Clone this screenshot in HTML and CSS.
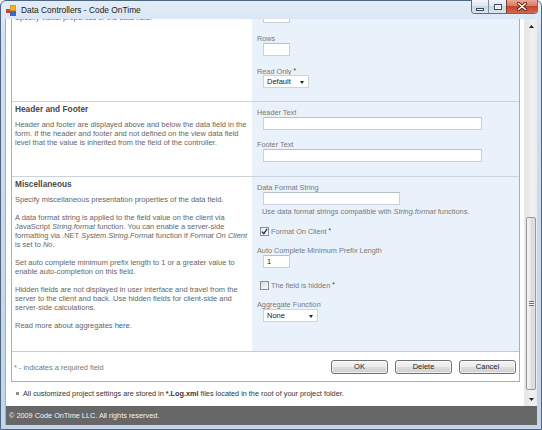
FILE: index.html
```html
<!DOCTYPE html>
<html>
<head>
<meta charset="utf-8">
<title>Data Controllers - Code OnTime</title>
<link rel="stylesheet" href="styles.css">
</head>
<body>
<div class="window">
  <div class="titlebar">
    <svg class="appicon" width="11" height="11" viewBox="0 0 11 11">
      <rect x="0" y="4" width="4" height="4" fill="#d8402e"/>
      <rect x="4" y="0" width="6" height="6" fill="#f3b425"/>
      <rect x="4" y="6" width="6" height="5" fill="#3a68c6"/>
      <rect x="4.5" y="0.5" width="5" height="5" fill="none" stroke="#c98a10" stroke-width="0.6"/>
    </svg>
    <span class="caption">Data Controllers - Code OnTime</span>
    <div class="capbtns">
      <div class="cb min"><span class="glyph-min"></span></div>
      <div class="cb max"><span class="glyph-max"></span></div>
      <div class="cb close">
        <svg width="12" height="9" viewBox="0 0 12 9">
          <path d="M2.5 1.5 L9.5 7.5 M9.5 1.5 L2.5 7.5" stroke="#5a1a10" stroke-width="3.2" stroke-linecap="round"/>
          <path d="M2.5 1.5 L9.5 7.5 M9.5 1.5 L2.5 7.5" stroke="#ffffff" stroke-width="1.6" stroke-linecap="round"/>
        </svg>
      </div>
    </div>
  </div>
  <div class="client">
    <div class="main">
      <div class="viewport">
        <div class="panel">
          <div class="row first">
            <div class="lcol">
              <div class="sec-space"></div>
              <p>Specify visual properties of the data field.</p>
            </div>
            <div class="rcol">
              <div class="label"></div>
              <div class="input small"></div>
              <div class="label gap11">Rows</div>
              <div class="input small"></div>
              <div class="label gap10">Read Only <span class="req">*</span></div>
              <div class="select w46">Default<span class="arrow"></span></div>
            </div>
          </div>
          <div class="row">
            <div class="lcol">
              <div class="sec-title">Header and Footer</div>
              <p>Header and footer are displayed above and below the data field in the<br>form. If the header and footer and not defined on the view data field<br>level that the value is inherited from the field of the controller.</p>
            </div>
            <div class="rcol">
              <div class="label">Header Text</div>
              <div class="input wide"></div>
              <div class="label gap10">Footer Text</div>
              <div class="input wide"></div>
            </div>
          </div>
          <div class="row">
            <div class="lcol">
              <div class="sec-title">Miscellaneous</div>
              <p>Specify miscellaneous presentation properties of the data field.</p>
              <p>A data format string is applied to the field value on the client via<br>JavaScript <i>String.format</i> function. You can enable a server-side<br>formatting via .NET <i>System.String.Format</i> function if <i>Format On Client</i><br>is set to <i>No</i>.</p>
              <p>Set auto complete minimum prefix length to 1 or a greater value to<br>enable auto-completion on this field.</p>
              <p>Hidden fields are not displayed in user interface and travel from the<br>server to the client and back. Use hidden fields for client-side and<br>server-side calculations.</p>
              <p>Read more about aggregates <a class="link">here</a>.</p>
            </div>
            <div class="rcol">
              <div class="label">Data Format String</div>
              <div class="input mid"></div>
              <div class="hint">Use data format strings compatible with <i>String.format</i> functions.</div>
              <div class="check gap10">
                <span class="box checked">
                  <svg width="7" height="7" viewBox="0 0 7 7"><path d="M1 3.6 L2.8 5.6 L6.2 0.9" fill="none" stroke="#1d2f5c" stroke-width="1.3"/></svg>
                </span>
                <span class="check-label">Format On Client <span class="req">*</span></span>
              </div>
              <div class="label gap10">Auto Complete Minimum Prefix Length</div>
              <div class="input small">1</div>
              <div class="check gap12">
                <span class="box"></span>
                <span class="check-label">The field is hidden <span class="req">*</span></span>
              </div>
              <div class="label gap9">Aggregate Function</div>
              <div class="select w55">None<span class="arrow"></span></div>
            </div>
          </div>
          <div class="footer">
            <span class="required">* - indicates a required field</span>
            <div class="buttons">
              <div class="btn">OK</div>
              <div class="btn">Delete</div>
              <div class="btn">Cancel</div>
            </div>
          </div>
        </div>
        <div class="note"><span class="bullet"></span>All customized project settings are stored in <b>*.Log.xml</b> files located in the root of your project folder.</div>
      </div>
      <div class="scrollbar">
        <div class="sb-btn">
          <svg width="5" height="3" viewBox="0 0 5 3"><path d="M0 3 L2.5 0 L5 3 Z" fill="#222"/></svg>
        </div>
        <div class="sb-track">
          <div class="thumb"><span class="grip"></span></div>
        </div>
        <div class="sb-btn">
          <svg width="5" height="3" viewBox="0 0 5 3"><path d="M0 0 L2.5 3 L5 0 Z" fill="#222"/></svg>
        </div>
      </div>
    </div>
    <div class="status">© 2009 Code OnTime LLC. All rights reserved.</div>
  </div>
</div>
</body>
</html>
```

FILE: styles.css
```css
* { box-sizing: border-box; }
html, body { margin: 0; padding: 0; }
body {
  width: 542px;
  height: 430px;
  overflow: hidden;
  background: #ffffff;
  font-family: "Liberation Sans", Arial, sans-serif;
}

.window {
  width: 542px;
  height: 430px;
  display: flex;
  flex-direction: column;
  border: 1px solid #4e6580;
  border-radius: 6px 6px 0 0;
  padding: 0 4px 4px 4px;
  background: linear-gradient(#e3edf8, #d2e1f2 8%, #c8d9ee 60%, #c2d5ec);
}

/* title bar */
.titlebar {
  height: 18px;
  display: flex;
  align-items: center;
  flex: none;
}
.appicon { margin-left: 1px; margin-top: 1px; flex: none; }
.caption {
  margin-left: 4px;
  font-size: 8.4px;
  color: #1b1b1b;
  white-space: nowrap;
}
.capbtns {
  margin-left: auto;
  margin-right: -1px;
  align-self: flex-start;
  margin-top: -1px;
  display: flex;
  height: 14px;
  border: 1px solid #5d6f86;
  border-top: none;
  border-radius: 0 0 4px 4px;
  overflow: hidden;
}
.cb {
  height: 13px;
  display: flex;
  align-items: center;
  justify-content: center;
}
.cb.min {
  width: 17px;
  border-right: 1px solid #7d8ea3;
  background: linear-gradient(#f2f5fa, #e1e8f1 45%, #cdd8e5 50%, #dbe4ee);
}
.cb.max {
  width: 18px;
  border-right: 1px solid #7b3a2c;
  background: linear-gradient(#f2f5fa, #e1e8f1 45%, #cdd8e5 50%, #dbe4ee);
}
.cb.close {
  width: 30px;
  background: linear-gradient(#e9a898, #d97c66 45%, #c5442c 50%, #d1694c);
}
.glyph-min {
  width: 8px;
  height: 3px;
  margin-top: 5px;
  background: #ffffff;
  border: 1px solid #3a4b60;
}
.glyph-max {
  width: 8px;
  height: 6px;
  border: 1px solid #3a4b60;
  box-shadow: inset 0 0 0 1px #ffffff;
  background: #dfe6ef;
}

/* client area */
.client {
  flex: 1;
  display: flex;
  flex-direction: column;
  border-left: 1px solid #9fb0c4;
  background: #ffffff;
}
.main {
  height: 387px;
  display: flex;
}
.viewport {
  width: 518px;
  height: 387px;
  overflow: hidden;
  background: #ffffff;
}

.panel {
  width: 509px;
  margin: -25px 0 0 5px;
  border: 1px solid #a4b0bf;
  background: #ffffff;
}

.row {
  display: grid;
  grid-template-columns: 240px 267px;
  border-top: 1px solid #cbd3de;
}
.row.first { border-top: none; }
.row.first .rcol { padding-bottom: 13px; }

.lcol {
  padding: 2px 3px 12px 3px;
  background: #ffffff;
  font-size: 7.5px;
  color: #666666;
}
.rcol {
  padding: 6px 0 14px 5px;
  background: #e9f1fb;
}

.sec-space { height: 10px; margin-bottom: 6px; }
.sec-title {
  font-weight: bold;
  font-size: 8.3px;
  line-height: 10px;
  color: #4a4a4a;
  margin-bottom: 6px;
  white-space: nowrap;
}
.lcol p {
  margin: 0 0 9px 0;
  line-height: 9px;
  white-space: nowrap;
}
.link { color: #2460ac; }

.label {
  font-size: 7.3px;
  line-height: 9px;
  height: 9px;
  color: #7a7a7a;
  white-space: nowrap;
}
.req { color: #333333; font-size: 6.5px; vertical-align: 1px; }
.gap9 { margin-top: 9.5px; }
.gap10 { margin-top: 10px; }
.gap11 { margin-top: 11px; }
.gap12 { margin-top: 12px; }

.input {
  margin-left: 6px;
  height: 13px;
  background: #ffffff;
  border: 1px solid #cad1da;
  border-top-color: #b7c0cb;
  font-size: 7.5px;
  line-height: 11px;
  padding-left: 3px;
  color: #222222;
}
.input.small { width: 27px; }
.input.wide { width: 219px; }
.input.mid { width: 137px; }

.select {
  margin-left: 6px;
  height: 13px;
  background: #ffffff;
  border: 1px solid #cdd4dc;
  font-size: 7.5px;
  line-height: 11px;
  padding-left: 3px;
  color: #222222;
  position: relative;
}
.select.w46 { width: 46px; }
.select.w55 { width: 55px; }
.arrow {
  position: absolute;
  right: 4px;
  top: 5px;
  width: 0;
  height: 0;
  border-left: 2.5px solid transparent;
  border-right: 2.5px solid transparent;
  border-top: 3px solid #222222;
}

.hint {
  margin: 2px 0 0 5px;
  font-size: 7.4px;
  line-height: 9px;
  color: #7a7a7a;
  white-space: nowrap;
}

.check {
  margin-left: 3px;
  height: 10px;
  display: flex;
  align-items: center;
}
.box {
  width: 9px;
  height: 9px;
  border: 1px solid #8c8e91;
  background: linear-gradient(135deg, #d9dcdf, #f7f8f9);
  display: flex;
  align-items: center;
  justify-content: center;
  flex: none;
}
.box.checked { background: linear-gradient(135deg, #e6e8ea, #fbfbfc); }
.check-label {
  margin-left: 2px;
  font-size: 7.3px;
  color: #7a7a7a;
  white-space: nowrap;
}

.footer {
  border-top: 1px solid #c6ccd4;
  display: flex;
  align-items: center;
  padding: 8px 3px 7px 2px;
  background: #ffffff;
}
.required {
  font-size: 7.4px;
  color: #777777;
  white-space: nowrap;
}
.buttons {
  margin-left: auto;
  display: flex;
  gap: 7px;
}
.btn {
  width: 57px;
  height: 14px;
  border: 1px solid #707070;
  border-radius: 3px;
  background: linear-gradient(#f3f3f3, #ebebeb 48%, #dddddd 52%, #cfcfcf);
  box-shadow: inset 0 0 0 1px rgba(255,255,255,0.7);
  font-size: 7.5px;
  line-height: 12px;
  text-align: center;
  color: #1e1e1e;
}

.note {
  margin: 7px 0 0 10px;
  display: flex;
  align-items: center;
  height: 9px;
  font-size: 7.3px;
  color: #333333;
  white-space: nowrap;
}
.note b { margin: 0 2px; }
.bullet {
  width: 3px;
  height: 3px;
  background: #8f8f8f;
  margin-right: 4px;
  flex: none;
}

/* scrollbar */
.scrollbar {
  width: 13px;
  height: 387px;
  display: flex;
  flex-direction: column;
  background: linear-gradient(90deg, #e4e4e4, #f1f1f1 60%, #ebebeb);
  border-left: 1px solid #e9e9e9;
}
.sb-btn {
  height: 14px;
  display: flex;
  align-items: center;
  justify-content: center;
  flex: none;
}
.sb-track { flex: 1; padding-top: 184px; }
.thumb {
  margin: 0 1px 0 1px;
  height: 173px;
  border: 1px solid #989898;
  border-radius: 2px;
  background: linear-gradient(90deg, #f4f4f4, #e8e8e8 50%, #d9d9d9 50%, #e1e1e1);
  display: flex;
  align-items: center;
  justify-content: center;
}
.grip {
  width: 5px;
  height: 5px;
  border-top: 1px solid #6e6e6e;
  border-bottom: 1px solid #6e6e6e;
  background: linear-gradient(#ffffff 0, #ffffff 1px, #6e6e6e 1px, #6e6e6e 2px, #ffffff 2px, #ffffff 3px, #6e6e6e 3px, #6e6e6e 4px, transparent 4px);
}

.status {
  height: 19px;
  flex: none;
  background: #676767;
  color: #f4f4f4;
  font-size: 7.3px;
  line-height: 19px;
  padding-left: 3px;
  white-space: nowrap;
}
```
